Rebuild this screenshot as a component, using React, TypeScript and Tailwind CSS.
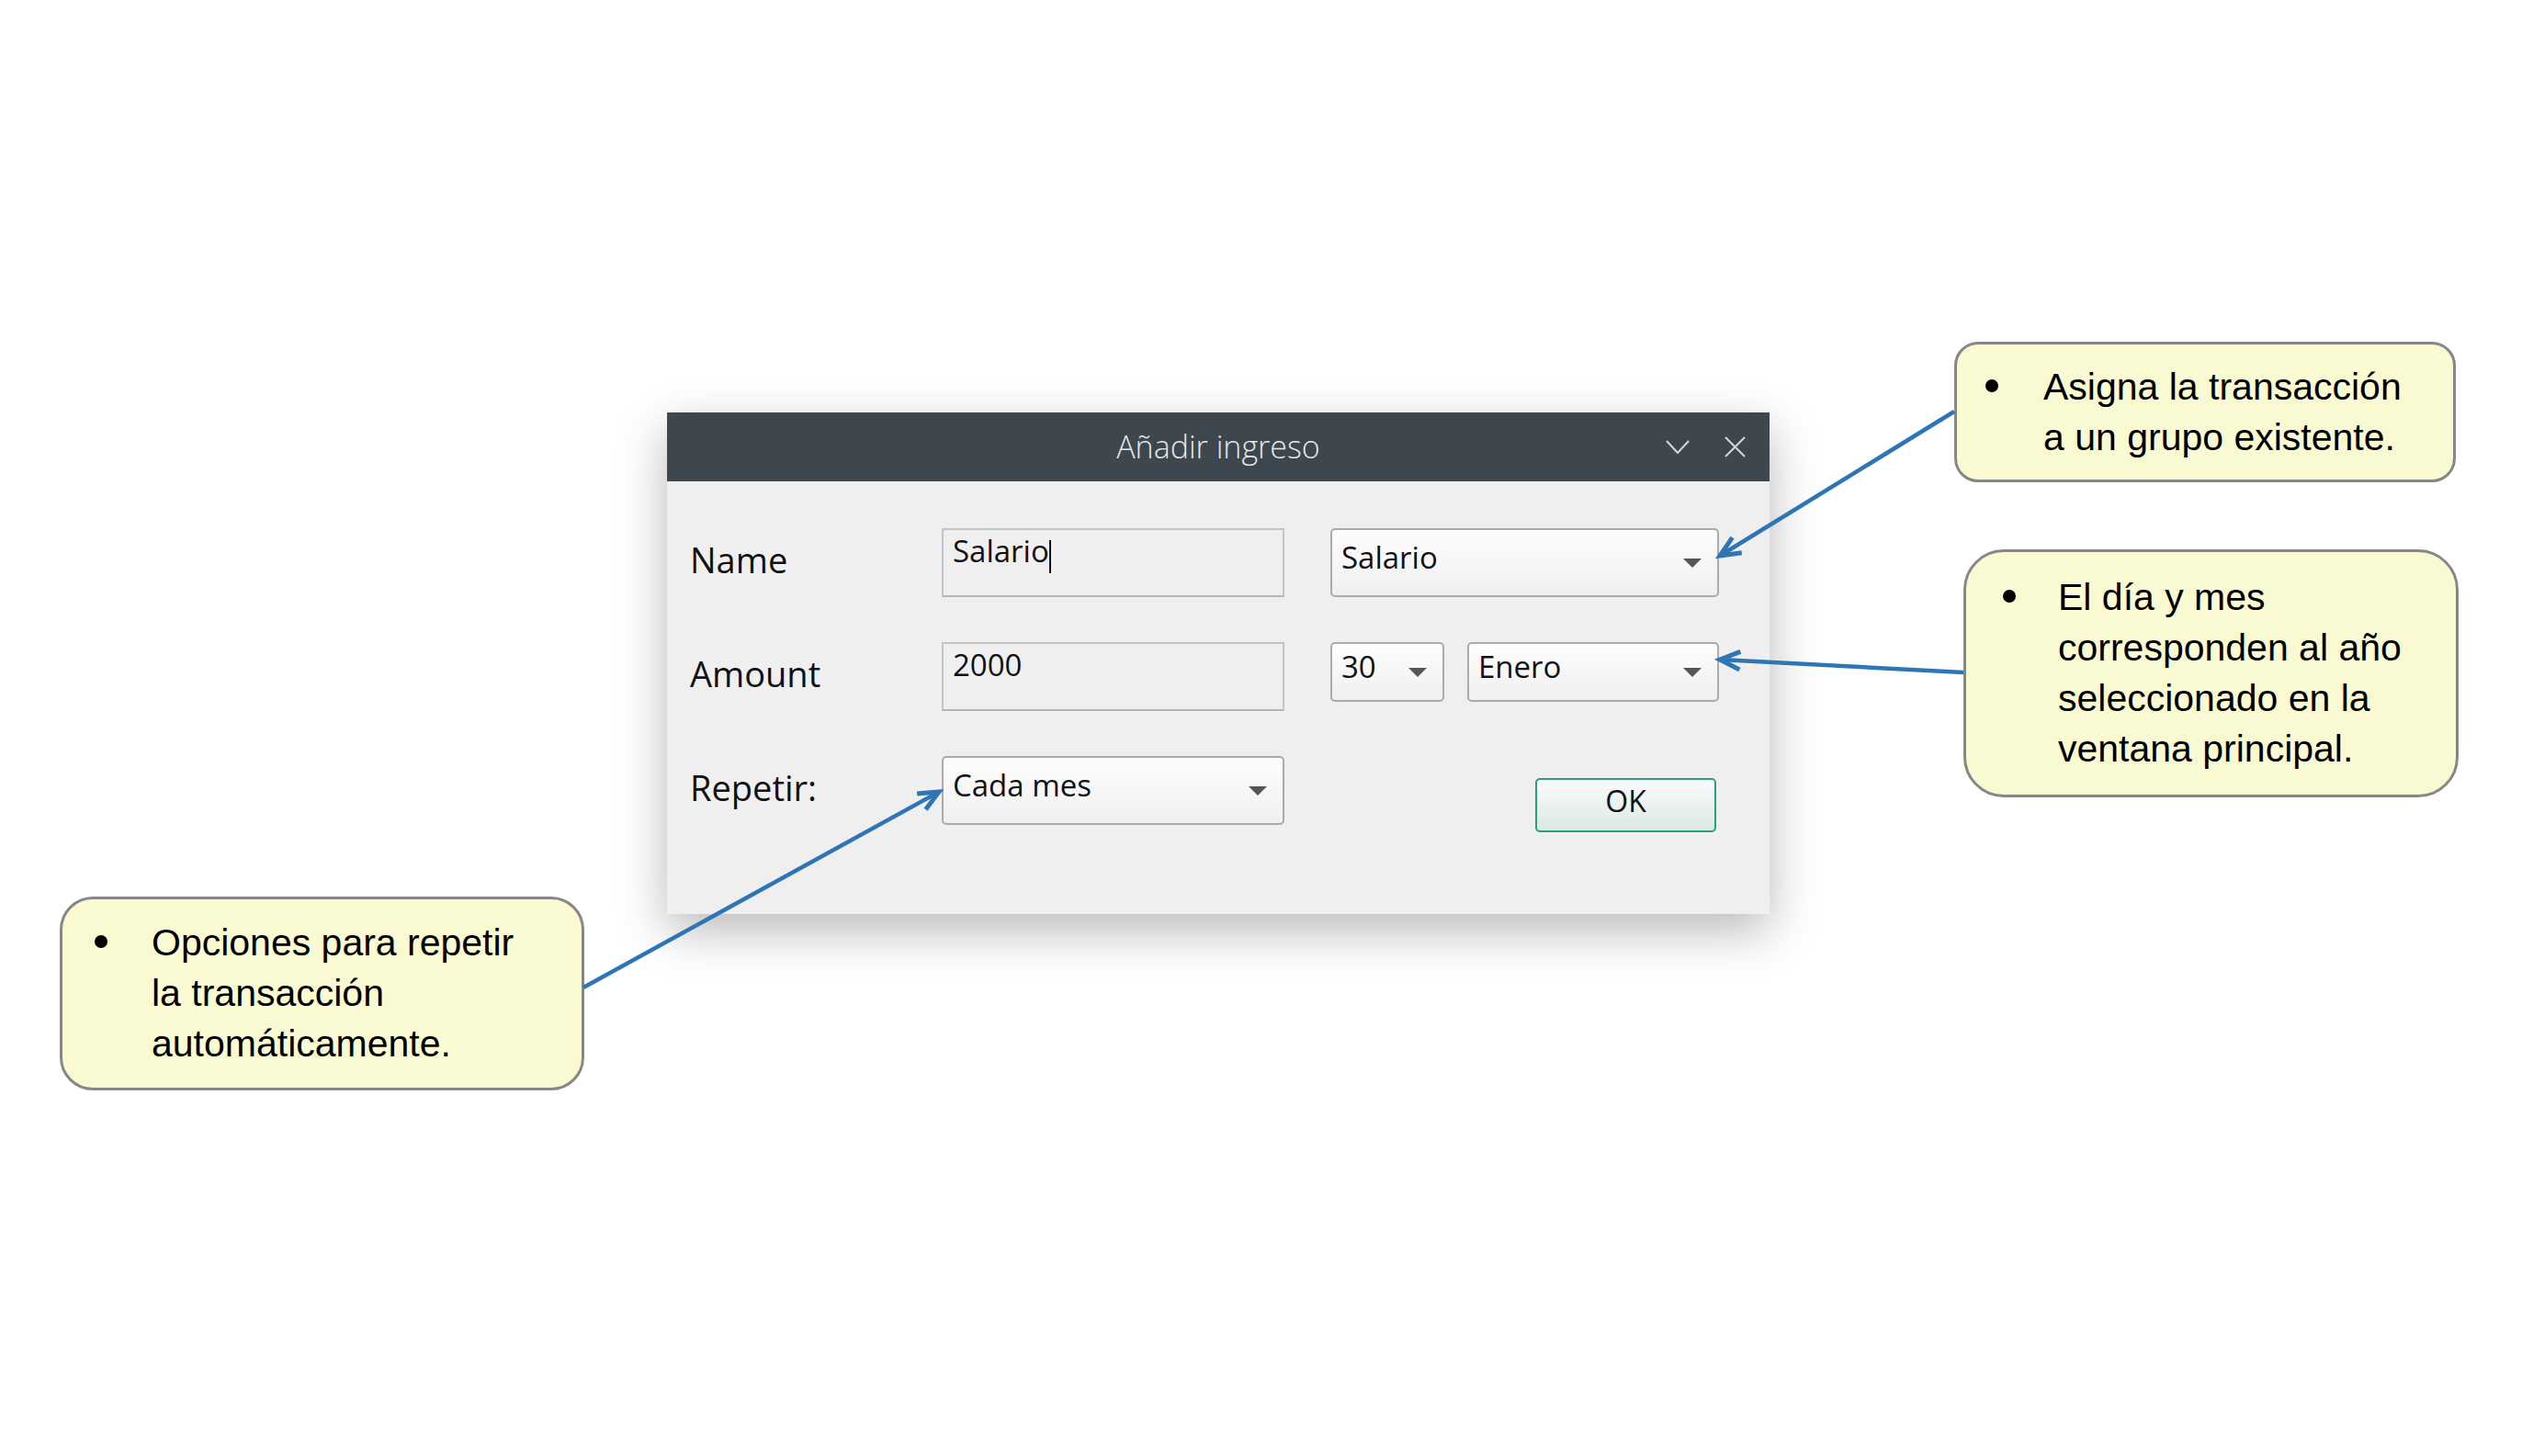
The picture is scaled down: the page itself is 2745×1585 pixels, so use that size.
import React from 'react';

const uiFont = { fontFamily: '"Open Sans", "Noto Sans", sans-serif' };
const noteFont = { fontFamily: '"Liberation Sans", Arial, sans-serif' };

const Caret: React.FC = () => (
  <svg width="20" height="10" viewBox="0 0 20 10" className="shrink-0">
    <polygon points="0,0 20,0 10,10" fill="#555555" />
  </svg>
);

const Combo: React.FC<{ value: string; className: string }> = ({ value, className }) => (
  <div
    className={
      'flex items-center justify-between pl-[10px] pr-[17px] pb-[12px] rounded-[5px] border-2 border-[#ababab] bg-gradient-to-b from-[#fdfdfd] to-[#f0f0f0] text-[33px] text-[#111] ' +
      className
    }
  >
    <span>{value}</span>
    <span className="pt-[12px]">
      <Caret />
    </span>
  </div>
);

const TextBox: React.FC<{ value: string; caret?: boolean }> = ({ value, caret }) => (
  <div className="w-[373px] h-[75px] border-2 border-[#c4c4c4] border-b-[#b5b5b5] bg-[#efefef] pl-[10px] text-[33px] leading-[45px] text-[#111] flex items-start">
    <span>{value}</span>
    {caret && <span className="w-[2px] h-[36px] mt-[11px] bg-[#111]" />}
  </div>
);

const Label: React.FC<{ children: React.ReactNode }> = ({ children }) => (
  <div className="w-[274px] h-[75px] flex items-center pb-[7px] text-[38px] text-[#111]">{children}</div>
);

const Dialog: React.FC = () => (
  <div
    className="absolute left-[726px] top-[449px] w-[1200px] bg-[#efefef] shadow-[0_18px_50px_rgba(0,0,0,0.28)]"
    style={uiFont}
  >
    <div className="relative h-[75px] bg-[#3e464e] flex items-center justify-center">
      <span className="text-[34px] font-light text-[#e4e6e8]">Añadir ingreso</span>
      <div className="absolute right-[26px] top-0 h-full flex items-center gap-[38px]">
        <svg width="26" height="15" viewBox="0 0 26 15">
          <polyline points="1,1 13,14 25,1" fill="none" stroke="#d6d8da" strokeWidth="2" />
        </svg>
        <svg width="23" height="23" viewBox="0 0 23 23">
          <path d="M1 1 L22 22 M22 1 L1 22" stroke="#d6d8da" strokeWidth="2" />
        </svg>
      </div>
    </div>

    <div className="flex flex-col pl-[25px] pt-[51px] pb-[89px]">
      <div className="flex items-start">
        <Label>Name</Label>
        <TextBox value="Salario" caret />
        <Combo value="Salario" className="ml-[50px] w-[423px] h-[75px]" />
      </div>

      <div className="flex items-start mt-[49px]">
        <Label>Amount</Label>
        <TextBox value="2000" />
        <Combo value="30" className="ml-[50px] w-[124px] h-[65px]" />
        <Combo value="Enero" className="ml-[25px] w-[274px] h-[65px]" />
      </div>

      <div className="flex items-start mt-[49px]">
        <Label>Repetir:</Label>
        <Combo value="Cada mes" className="w-[373px] h-[75px]" />
        <button className="ml-[273px] mt-[24px] w-[197px] h-[59px] pb-[10px] rounded-[5px] border-2 border-[#2a9d82] bg-gradient-to-b from-[#fbfcfb] to-[#dbe8e4] text-[32px] text-[#111] flex items-center justify-center">
          OK
        </button>
      </div>
    </div>
  </div>
);

type NoteProps = { lines: string[]; className: string; bulletPad: string; bulletW: string };

const Note: React.FC<NoteProps> = ({ lines, className, bulletPad, bulletW }) => (
  <div
    className={
      'absolute flex flex-col justify-center border-[3px] border-[#878787] bg-[#fafad2] text-[41px] leading-[55px] text-black ' +
      className
    }
    style={noteFont}
  >
    <div className={'flex items-start ' + bulletPad}>
      <span className={'shrink-0 pt-[19px] ' + bulletW}>
        <span className="block w-[14px] h-[14px] rounded-full bg-black" />
      </span>
      <div className="flex flex-col whitespace-nowrap">
        {lines.map((l) => (
          <span key={l}>{l}</span>
        ))}
      </div>
    </div>
  </div>
);

const head = (x1: number, y1: number, x2: number, y2: number) => {
  const a = Math.atan2(y2 - y1, x2 - x1);
  const len = 24;
  const w = 0.42;
  const p1 = [x2 - len * Math.cos(a - w), y2 - len * Math.sin(a - w)];
  const p2 = [x2 - len * Math.cos(a + w), y2 - len * Math.sin(a + w)];
  return `${p1[0]},${p1[1]} ${x2},${y2} ${p2[0]},${p2[1]}`;
};

const arrows = [
  [2127, 448, 1872, 605],
  [2137, 732, 1872, 718],
  [635, 1075, 1022, 862],
];

const App: React.FC = () => {
  return (
    <div className="relative w-[2745px] h-[1585px] bg-white overflow-hidden">
      <Dialog />

      <Note
        className="left-[2127px] top-[372px] w-[546px] h-[153px] rounded-[26px]"
        bulletPad="pl-[31px]"
        bulletW="w-[63px]"
        lines={['Asigna la transacción', 'a un grupo existente.']}
      />
      <Note
        className="left-[2137px] top-[598px] w-[539px] h-[270px] rounded-[44px]"
        bulletPad="pl-[40px]"
        bulletW="w-[60px]"
        lines={['El día y mes', 'corresponden al año', 'seleccionado en la', 'ventana principal.']}
      />
      <Note
        className="left-[65px] top-[976px] w-[571px] h-[211px] rounded-[36px]"
        bulletPad="pl-[35px]"
        bulletW="w-[62px]"
        lines={['Opciones para repetir', 'la transacción', 'automáticamente.']}
      />

      <svg className="absolute inset-0 pointer-events-none" width="2745" height="1585">
        {arrows.map(([x1, y1, x2, y2], i) => (
          <g key={i} stroke="#2e75b6" fill="none" strokeWidth="4.5">
            <line x1={x1} y1={y1} x2={x2} y2={y2} />
            <polyline points={head(x1, y1, x2, y2)} strokeWidth="5" />
          </g>
        ))}
      </svg>
    </div>
  );
};

export default App;
